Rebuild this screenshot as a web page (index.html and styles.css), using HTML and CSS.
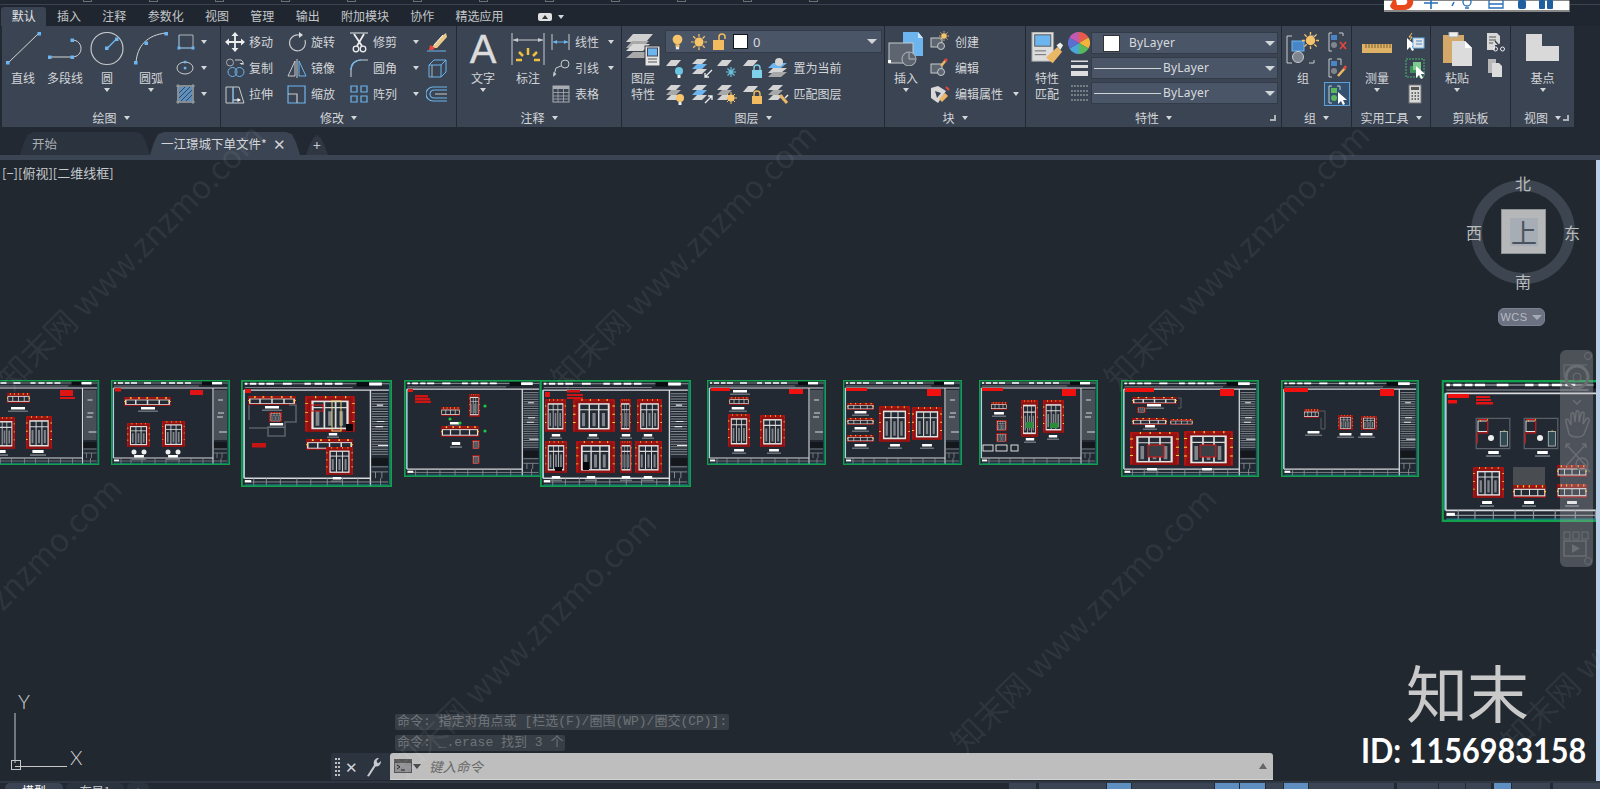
FILE: index.html
```html
<!DOCTYPE html>
<html lang="zh">
<head>
<meta charset="utf-8">
<title>AutoCAD</title>
<link rel="stylesheet" href="styles.css">
</head>
<body>
<svg class="sprite" aria-hidden="true">
  <defs>
    <symbol id="dot" viewBox="0 0 4 4"><rect width="4" height="4" fill="#6db5ee"/></symbol>
    <symbol id="i-line" viewBox="0 0 36 34"><path d="M3 31 34 1" stroke="#d4d6d8" fill="none"/><rect x="1" y="29" width="3.5" height="3.5" fill="#6db5ee"/><rect x="32.5" y="0" width="3.5" height="3.5" fill="#6db5ee"/></symbol>
    <symbol id="i-poly" viewBox="0 0 36 34"><path d="M3 25H25C37 25 37 8 25 8" stroke="#d4d6d8" fill="none"/><rect x="1" y="23.5" width="3.5" height="3.5" fill="#6db5ee"/><rect x="23.5" y="23.5" width="3.5" height="3.5" fill="#6db5ee"/><rect x="23.5" y="6.5" width="3.5" height="3.5" fill="#6db5ee"/></symbol>
    <symbol id="i-circle" viewBox="0 0 36 34"><circle cx="18" cy="16.500" r="16" stroke="#c4c7ca" fill="none" stroke-width="1.200"/><path d="M18 16.500 27 7.500" stroke="#6db5ee" stroke-width="1.500"/><rect x="16" y="14.500" width="3.500" height="3.500" fill="#6db5ee"/><rect x="26" y="5.500" width="3.500" height="3.500" fill="#6db5ee"/></symbol>
    <symbol id="i-arc" viewBox="0 0 36 34"><path d="M3 31C4 14 14 3 33 1" stroke="#d4d6d8" fill="none"/><rect x="1" y="29" width="3.500" height="3.500" fill="#6db5ee"/><rect x="11.500" y="9.500" width="3.500" height="3.500" fill="#6db5ee"/><rect x="31.500" y="0" width="3.500" height="3.500" fill="#6db5ee"/></symbol>
    <symbol id="i-rect" viewBox="0 0 22 22"><path d="M5 4H19V17H5Z" stroke="#aeb3b8" fill="none"/><path d="M5 4V17H19" stroke="#6db5ee" fill="none" opacity=".6"/><rect x="3.500" y="15.500" width="3" height="3" fill="#6db5ee"/><rect x="17.500" y="15.500" width="3" height="3" fill="#6db5ee"/></symbol>
    <symbol id="i-ellipse" viewBox="0 0 22 22"><ellipse cx="11" cy="11" rx="8" ry="6" stroke="#c8cbce" fill="none"/><rect x="9.800" y="9.800" width="2.500" height="2.500" fill="#6db5ee"/><rect x="9.800" y="3.800" width="2.500" height="2.500" fill="#6db5ee"/></symbol>
    <symbol id="i-hatch" viewBox="0 0 22 22"><rect x="5" y="4" width="13" height="14" fill="#5f8fbc"/><path d="M5 10 11 4M5 15 16 4M7 18 18 7M12 18 18 12" stroke="#31465e"/><path d="M4 3H19V19H4ZM4 1V21M19 1V21M2 3H21M2 19H21" stroke="#9ea4aa" fill="none"/></symbol>
    <symbol id="i-move" viewBox="0 0 22 22"><path d="M11 2V20M2 11H20" stroke="#eee" stroke-width="1.800"/><path d="M11 1 14.500 5H7.500ZM11 21 7.500 17H14.500ZM1 11 5 7.500V14.500ZM21 11 17 14.500V7.500Z" fill="#eee"/></symbol>
    <symbol id="i-copy" viewBox="0 0 22 22"><circle cx="6" cy="5.500" r="3.500" stroke="#aaaeb2" fill="none"/><path d="M11 3H17L19 5V8" stroke="#c8cbce" fill="none"/><path d="M17.500 7.800 15.500 6H20Z" fill="#ddd"/><circle cx="8.500" cy="15" r="4.500" stroke="#6db5ee" fill="none"/><circle cx="15.500" cy="15" r="4.500" stroke="#6db5ee" fill="none"/></symbol>
    <symbol id="i-stretch" viewBox="0 0 22 22"><path d="M2 4H9V20H2ZM9 4H15L20 20H9" stroke="#c8cbce" fill="none"/><path d="M9 17H15" stroke="#fff"/><path d="M17 17 13.500 15V19Z" fill="#fff"/><path d="M9 4V20" stroke="#6db5ee"/></symbol>
    <symbol id="i-rotate" viewBox="0 0 22 22"><path d="M13 4A8 8 0 1 0 19 9" stroke="#c4c7ca" fill="none" stroke-width="1.200"/><path d="M13 1V7L17 4Z" fill="#ddd"/></symbol>
    <symbol id="i-mirror" viewBox="0 0 22 22"><path d="M9 4 2 19H9Z" stroke="#c8cbce" fill="none"/><path d="M13 4 20 19H13Z" stroke="#6db5ee" fill="none"/><path d="M11 2V21" stroke="#c8cbce"/></symbol>
    <symbol id="i-scale" viewBox="0 0 22 22"><path d="M2 3H19V20H2Z" stroke="#6db5ee" fill="none" stroke-width="1.200"/><path d="M2 11H11V20" stroke="#c8cbce" fill="none" stroke-width="1.200"/></symbol>
    <symbol id="i-trim" viewBox="0 0 22 22"><path d="M2 2H20" stroke="#aeb3b8" stroke-width="1.500"/><path d="M6 3 14 15M16 3 9 15" stroke="#eee" stroke-width="1.800"/><circle cx="8" cy="18" r="2.800" stroke="#eee" fill="none" stroke-width="1.300"/><circle cx="15" cy="18" r="2.800" stroke="#eee" fill="none" stroke-width="1.300"/></symbol>
    <symbol id="i-fillet" viewBox="0 0 22 22"><path d="M3 20V13C3 7 7 3 13 3H20" stroke="#c8cbce" fill="none" stroke-width="1.100"/><path d="M3 13C3 7 7 3 13 3" stroke="#6db5ee" fill="none" stroke-width="1.100"/></symbol>
    <symbol id="i-array" viewBox="0 0 22 22"><path d="M3 3H9V9H3ZM13 3H19V9H13ZM3 13H9V19H3ZM13 13H19V19H13Z" stroke="#6db5ee" fill="none" stroke-width="1.200"/></symbol>
    <symbol id="i-erase" viewBox="0 0 22 22"><path d="M6 16 16 5 20 2 21 6 11 17H7Z" fill="#e9c98a"/><path d="M4 14 9 17 7 19H3Z" fill="#e9453c"/><path d="M1 20H20" stroke="#6db5ee"/><path d="M8 14 17 4" stroke="#fff"/></symbol>
    <symbol id="i-box" viewBox="0 0 22 22"><path d="M3 8H15V20H3ZM3 8 8 3H20V15L15 20M15 8 20 3" stroke="#6db5ee" fill="none"/><path d="M6 8V20" stroke="#aeb3b8"/></symbol>
    <symbol id="i-offset" viewBox="0 0 22 22"><path d="M21 7H8A4 4 0 0 0 8 15H21" stroke="#6db5ee" fill="none" stroke-width="1.200"/><path d="M21 4H7A7 7 0 0 0 7 18H21" stroke="#6db5ee" fill="none" stroke-width="1.200"/><path d="M21 11H9" stroke="#c8cbce"/></symbol>
    <symbol id="i-dim" viewBox="0 0 36 34"><path d="M2 1V33M34 1V33" stroke="#c8cbce"/><path d="M3 8H33" stroke="#c8cbce"/><path d="M3 8 8 6V10ZM33 8 28 6V10Z" fill="#c8cbce"/><path d="M18 16V23M9 20 13 24M27 20 23 24M6 28H12M24 28H30" stroke="#f0c040" stroke-width="2.500"/></symbol>
    <symbol id="i-dimlin" viewBox="0 0 22 22"><path d="M2 3V19M19 3V19" stroke="#c8cbce"/><path d="M3 11H18" stroke="#6db5ee"/><path d="M3 11 7 9V13ZM18 11 14 9V13Z" fill="#6db5ee"/></symbol>
    <symbol id="i-lead" viewBox="0 0 22 22"><circle cx="15" cy="7" r="4" stroke="#c8cbce" fill="none"/><path d="M11 9 6 11 4 18" stroke="#c8cbce" fill="none"/><path d="M3 20 3.500 15 6.500 17Z" fill="#c8cbce"/></symbol>
    <symbol id="i-table" viewBox="0 0 22 22"><rect x="3" y="3" width="16" height="16" fill="none" stroke="#a9adb2"/><rect x="3" y="3" width="16" height="3" fill="#a9adb2"/><path d="M3 9.500H19M3 13H19M3 16H19M8 6V19M13.500 6V19" stroke="#a9adb2" stroke-width=".8"/></symbol>
    <symbol id="i-layers" viewBox="0 0 36 34"><path d="M8 2H28L21 10H1Z" fill="#d0d0d0"/><path d="M7 9H24L17 16H1Z" fill="#a9a9a9"/><path d="M8 12H25L18 19H1Z" fill="#d8d8d8"/><path d="M8 20H24V26H1Z" fill="#a9a9a9"/><rect x="20" y="14" width="15" height="20" fill="#e5e5e5" stroke="#333a45"/><rect x="22.500" y="16" width="10" height="8" fill="#6db5ee" stroke="#445"/><path d="M23 27H32M23 30H32" stroke="#555"/></symbol>
    <symbol id="i-bulb" viewBox="0 0 16 22"><circle cx="8" cy="8" r="6" fill="#f6c56b"/><rect x="5.500" y="14" width="5" height="3" fill="#f6c56b"/><rect x="6" y="17" width="4" height="3" fill="#eee"/></symbol>
    <symbol id="i-sun" viewBox="0 0 18 18"><circle cx="9" cy="9" r="5" fill="#f6c56b"/><path d="M9 0V3M9 15V18M0 9H3M15 9H18M2.500 2.500 5 5M13 13 15.500 15.500M2.500 15.500 5 13M13 5 15.500 2.500" stroke="#f6c56b" stroke-width="1.400"/></symbol>
    <symbol id="i-lock" viewBox="0 0 16 18"><rect x="1" y="7" width="11" height="10" fill="#f3bb5f"/><path d="M7 7V4A3 3 0 0 1 13 4V6" stroke="#f3bb5f" fill="none" stroke-width="1.500"/></symbol>
    <symbol id="i-sheet" viewBox="0 0 22 22"><path d="M6 3H16L11 9H1Z" fill="#d4d4d4"/></symbol>
    <symbol id="i-stack" viewBox="0 0 22 22"><path d="M6 2H16L11 7H1Z" fill="#d4d4d4"/><path d="M6 7H16L11 12H1Z" fill="#a8a8a8"/><path d="M6 12H16L11 17H1Z" fill="#d4d4d4"/></symbol>
    <symbol id="i-stackb" viewBox="0 0 22 22"><path d="M6 2H16L11 7H1Z" fill="#d4d4d4"/><path d="M6 7H16L11 12H1Z" fill="#6db5ee"/><path d="M6 12H16L11 17H1Z" fill="#d4d4d4"/></symbol>
    <symbol id="l1" viewBox="0 0 22 22"><use href="#i-sheet"/><circle cx="14" cy="14" r="4" fill="#6cc4e0"/><rect x="12.500" y="18" width="3" height="3" fill="#eee"/></symbol>
    <symbol id="l2" viewBox="0 0 22 22"><use href="#i-stackb"/><path d="M21 13 14 20M14 16V20H18" stroke="#eee" fill="none" stroke-width="1.300"/></symbol>
    <symbol id="l3" viewBox="0 0 22 22"><use href="#i-sheet"/><path d="M15 10V20M10 15H20M11.500 11.500 18.500 18.500M18.500 11.500 11.500 18.500" stroke="#6cc4e0" stroke-width="1.200"/></symbol>
    <symbol id="l4" viewBox="0 0 22 22"><use href="#i-sheet"/><rect x="10" y="13" width="10" height="8" fill="#7ed1e8"/><path d="M12 13V11A3 3 0 0 1 18 11V13" stroke="#7ed1e8" fill="none" stroke-width="1.400"/></symbol>
    <symbol id="l5" viewBox="0 0 22 22"><path d="M6 6H20L14 11H1Z" fill="#6db5ee"/><path d="M6 11H20L14 16H1Z" fill="#d4d4d4"/><path d="M6 15H20L14 20H1Z" fill="#a8a8a8"/><circle cx="12" cy="5" r="4" fill="#d4d4d4"/></symbol>
    <symbol id="l6" viewBox="0 0 22 22"><use href="#i-stack"/><circle cx="15" cy="15" r="4" fill="#f6c56b"/><rect x="13.500" y="19" width="3" height="3" fill="#eee"/></symbol>
    <symbol id="l7" viewBox="0 0 22 22"><use href="#i-stackb"/><path d="M14 20 21 13M17 13H21V17" stroke="#eee" fill="none" stroke-width="1.300"/></symbol>
    <symbol id="l8" viewBox="0 0 22 22"><use href="#i-stack"/><circle cx="15" cy="15" r="3.500" fill="#f6c56b"/><path d="M15 9V21M9 15H21M11 11 19 19M19 11 11 19" stroke="#f6c56b"/></symbol>
    <symbol id="l9" viewBox="0 0 22 22"><use href="#i-sheet"/><rect x="10" y="13" width="10" height="8" fill="#f3bb5f"/><path d="M12 13V11A3 3 0 0 1 18 11V13" stroke="#f3bb5f" fill="none" stroke-width="1.400"/></symbol>
    <symbol id="l10" viewBox="0 0 22 22"><use href="#i-stack"/><path d="M13 12 20 20" stroke="#eab765" stroke-width="3"/><path d="M18 15 21 12" stroke="#eee" stroke-width="1.500"/></symbol>
    <symbol id="i-insert" viewBox="0 0 36 34"><path d="M15 0H30L35 6V24H15Z" fill="#6db5ee"/><path d="M30 0 35 6H30Z" fill="#cfe6fa"/><rect x="1" y="11" width="24" height="20" fill="#5d6570" stroke="#c8cbce"/><circle cx="21" cy="27" r="7" fill="#5d6570" stroke="#b8bbbe"/><path d="M21 21V27H27" stroke="#b8bbbe" fill="none"/><rect x="0" y="28" width="3" height="3" fill="#fff"/></symbol>
    <symbol id="b1" viewBox="0 0 22 22"><rect x="3" y="7" width="11" height="9" fill="#5d6570" stroke="#c8cbce"/><circle cx="13" cy="15" r="3.500" fill="#5d6570" stroke="#c8cbce"/><use href="#i-sun" x="11" y="0" width="10" height="10"/></symbol>
    <symbol id="b2" viewBox="0 0 22 22"><rect x="3" y="7" width="11" height="9" fill="#5d6570" stroke="#c8cbce"/><circle cx="13" cy="15" r="3.500" fill="#5d6570" stroke="#c8cbce"/><path d="M13 9 18 3" stroke="#eab765" stroke-width="2.500"/><path d="M17 4 19 2" stroke="#e9453c" stroke-width="2.500"/></symbol>
    <symbol id="b3" viewBox="0 0 22 22"><path d="M3 5 10 3 18 8 10 20 3 15Z" fill="#d8d8d8"/><path d="M7 8 13 10 9 15Z" fill="#3b4453"/><path d="M11 16 17 10 20 13 14 19Z" fill="#eab765"/><path d="M18 4 21 7" stroke="#e9453c" stroke-width="2"/></symbol>
    <symbol id="i-match" viewBox="0 0 34 36"><rect x="1" y="0" width="23" height="31" fill="#ddd" stroke="#8b8f94"/><rect x="4" y="3" width="17" height="12" fill="#6db5ee" stroke="#555"/><path d="M4 20H16M4 24H16" stroke="#666"/><path d="M16 27 28 16 33 21 23 33Z" fill="#eab765"/><path d="M27 14 31 11 34 14 31 19Z" fill="#eee"/></symbol>
    <symbol id="i-wheel" viewBox="0 0 22 22"><path d="M11 11 11 0A11 11 0 0 1 20.500 5.500Z" fill="#e75a4c"/><path d="M11 11 20.500 5.500A11 11 0 0 1 20.500 16.500Z" fill="#f2b33d"/><path d="M11 11 20.500 16.500A11 11 0 0 1 11 22Z" fill="#57b95c"/><path d="M11 11 11 22A11 11 0 0 1 1.500 16.500Z" fill="#4aa7d8"/><path d="M11 11 1.500 16.500A11 11 0 0 1 1.500 5.500Z" fill="#5b6fd0"/><path d="M11 11 1.500 5.500A11 11 0 0 1 11 0Z" fill="#c45ab0"/></symbol>
    <symbol id="i-lw" viewBox="0 0 22 22"><path d="M3 4H20M3 4.500H20" stroke="#ddd"/><rect x="3" y="8" width="17" height="3" fill="#ddd"/><rect x="3" y="14" width="17" height="5" fill="#ddd"/></symbol>
    <symbol id="i-lt" viewBox="0 0 22 22"><path d="M3 4H20M3 9H20M3 13H20M3 18H20" stroke="#aeb3b8" stroke-dasharray="2 1" stroke-width="1.200"/></symbol>
    <symbol id="i-group" viewBox="0 0 36 34"><path d="M7 4H2V31H7M24 4 29 4M24 31H29V28" stroke="#c8cbce" fill="none"/><rect x="7" y="9" width="12" height="10" fill="#4a86c5" stroke="#6db5ee"/><circle cx="13" cy="25" r="5.500" fill="#7e858e" stroke="#c8cbce"/><use href="#i-sun" x="17" y="0" width="17" height="17"/></symbol>
    <symbol id="g1" viewBox="0 0 22 22"><path d="M6 2H3V20H6M13 2H17V5" stroke="#c8cbce" fill="none"/><rect x="5" y="4" width="6" height="5" fill="#4a86c5"/><circle cx="8" cy="14" r="3" fill="#7e858e"/><path d="M14 11 20 18M20 11 14 18" stroke="#e9453c" stroke-width="1.600"/></symbol>
    <symbol id="g2" viewBox="0 0 22 22"><path d="M6 2H3V20H6M11 2H15V8" stroke="#c8cbce" fill="none"/><rect x="5" y="4" width="6" height="5" fill="#4a86c5"/><circle cx="8" cy="14" r="3" fill="#7e858e"/><path d="M12 19 19 11" stroke="#eab765" stroke-width="2.500"/><path d="M18 12 20 9" stroke="#e9453c" stroke-width="2.500"/></symbol>
    <symbol id="g3" viewBox="0 0 22 22"><path d="M6 3H3V20H6M11 3H14V7" stroke="#c8cbce" fill="none"/><rect x="5" y="5" width="6" height="5" fill="#5db55e"/><circle cx="8" cy="15" r="3" fill="#5db55e"/><path d="M12 9V21L15 18 17 22 19 21 17 17H21Z" fill="#fff"/></symbol>
    <symbol id="i-ruler" viewBox="0 0 36 34"><rect x="3" y="12" width="30" height="9" fill="#deb368"/><path d="M7 12V16M10 12V16M13 12V16M16 12V16M19 12V16M22 12V16M25 12V16M28 12V16M31 12V16" stroke="#7b5f2a"/></symbol>
    <symbol id="u1" viewBox="0 0 22 22"><path d="M3 7V19L6 16 8 20 10 19 8 15H12Z" fill="#fff"/><rect x="9" y="7" width="11" height="10" fill="#e5e5e5" stroke="#6db5ee"/><path d="M12 10H18M12 13H18" stroke="#4a86c5"/><path d="M8 2 5 6H8L6 9" stroke="#f6c56b" fill="none"/></symbol>
    <symbol id="u2" viewBox="0 0 22 22"><path d="M2 2H20V20H2Z" stroke="#4db36b" stroke-dasharray="2 1" fill="none"/><path d="M6 9H14V16H6Z" fill="#3f8f5a"/><path d="M9 5H17V13H9Z" fill="#7ecb8f"/><path d="M12 9V21L15 18 17 22 19 21 17 17H21Z" fill="#fff"/></symbol>
    <symbol id="u3" viewBox="0 0 22 22"><rect x="5" y="2" width="12" height="18" fill="#d8d8d8" stroke="#777"/><rect x="7" y="4" width="8" height="3" fill="#555"/><path d="M7.500 10H9M10.500 10H12M13.500 10H15M7.500 13H9M10.500 13H12M13.500 13H15M7.500 16H9M10.500 16H12M13.500 16H15" stroke="#444" stroke-width="1.500"/></symbol>
    <symbol id="i-paste" viewBox="0 0 36 34"><rect x="4" y="3" width="21" height="28" fill="#d3a868"/><rect x="10" y="0" width="9" height="5" fill="#eee" stroke="#aaa"/><path d="M13 9H26L33 16V34H13Z" fill="#dcdcdc"/><path d="M26 9 33 16H26Z" fill="#fff"/></symbol>
    <symbol id="p1" viewBox="0 0 22 22"><path d="M3 2H13L16 5V14H11V19H3Z" fill="#d8d8d8"/><path d="M5 6H12M5 9H12M5 12H9" stroke="#555"/><path d="M11 10 19 19M19 10 11 19" stroke="#3d4450" stroke-width="1.500"/><circle cx="11.500" cy="18" r="2" stroke="#eee" fill="none"/><circle cx="18.500" cy="18" r="2" stroke="#eee" fill="none"/></symbol>
    <symbol id="p2" viewBox="0 0 22 22"><path d="M4 2H12V16H4Z" fill="#b8b8b8"/><path d="M8 6H15L18 9V20H8Z" fill="#dcdcdc"/></symbol>
    <symbol id="i-base" viewBox="0 0 36 34"><path d="M1 2H17V14H34V29H1Z" fill="#d9d9d9"/></symbol>

    <symbol id="frame" viewBox="0 0 119 85" preserveAspectRatio="none">
      <rect x=".7" y=".7" width="117.600" height="83.600" fill="#222933" stroke="#11a04b" stroke-width="1.400"/>
      <path d="M2.500 3H117" stroke="#8f959a" stroke-width=".8"/>
      <path d="M3 3H5M7 3H12M14 3H18.500M20 3H26M33 3H40M50 3H55M58 3H64M66 3H72M74 3H80" stroke="#fff" stroke-width="1.600"/>
      <rect x="91" y="1.700" width="10" height="3.500" fill="#0a0d12"/><rect x="101" y="2" width="10" height="2.400" fill="#fff"/>
      <path d="M3 6H88" stroke="#8f959a" stroke-width=".7"/>
      <path d="M2.500 8V78M2.500 78H102M2.500 8H102V84M102 8H116.500" stroke="#d8dadc" stroke-width="1.100" fill="none"/>
      <path d="M2.200 8V78" stroke="#7fd6e0" stroke-width=".8"/>
      <path d="M103 11H116M103 13H116M103 15H116M103 17H116M103 19H116M103 21H116M103 23H116M103 25H116M103 27H116M103 29H116M103 31H116M103 33H116M103 35H116M103 37H116M103 39H116M103 41H116M103 43H116M103 45H116M103 47H116M103 49H116M103 51H116M103 53H116M103 55H116M103 57H116M103 59H116" stroke="#858b90" stroke-width=".8"/>
      <path d="M107 20H112M107 33H113M106 37H112M108 52H116" stroke="#e8e8e8" stroke-width=".9"/>
      <rect x="103" y="62" width="13" height="6" fill="#14181d"/>
      <path d="M103 69H116M103 73H116M106 73V78M111 73V78" stroke="#8f959a" stroke-width=".7"/>
      <path d="M3 81H116M10 78V84M20 78V84M31 78V84M44 78V84M55 78V84M68 78V84M80 78V84M92 78V84M110 78V84" stroke="#8f959a" stroke-width=".7"/>
      <rect x="3" y="79.500" width="5" height="1.800" fill="#fff"/>
      <path d="M3 83.300H116.500M117.200 2V83" stroke="#1b8b8b" stroke-width=".7"/>
    </symbol>
    <symbol id="cab" viewBox="0 0 40 40" preserveAspectRatio="none">
      <rect x="0" y="0" width="40" height="40" fill="#8e1212"/>
      <rect x="6" y="6" width="28" height="30" fill="#232a33" stroke="#e4e4e4" stroke-width="1.800"/>
      <path d="M15.500 6V36M24.500 6V36M6 13H34" stroke="#d8d8d8" stroke-width="1.400"/>
      <path d="M10 17V33M20 17V33M29 17V33" stroke="#80858b" stroke-width="3"/>
      <path d="M1 1H39M1 1V39M39 1V39" stroke="#b81414" stroke-width="1.600" fill="none"/>
      <path d="M1 8V9M1 18V19M1 28V29M39 8V9M39 18V19M39 28V29M8 1H9M16 1H17M24 1H25M32 1H33" stroke="#f5d633" stroke-width="3"/>
    </symbol>
    <symbol id="cabw" viewBox="0 0 80 30" preserveAspectRatio="none">
      <rect width="80" height="30" fill="#8e1212"/>
      <rect x="3" y="10" width="74" height="15" fill="#232a33" stroke="#e8e8e8" stroke-width="2.500"/>
      <path d="M20 10V25M40 10V25M60 10V25" stroke="#dedede" stroke-width="2.500"/>
      <path d="M2 2H78" stroke="#b81414" stroke-width="2.500"/>
      <path d="M10 3H13M24 3H27M38 3H41M55 3H58M70 3H73M1 14V17M78 14V17" stroke="#f5d633" stroke-width="5"/>
    </symbol>
    <symbol id="room" viewBox="0 0 60 50" preserveAspectRatio="none">
      <path d="M2 2H58V48H2Z" stroke="#5c6167" fill="none" stroke-width="2"/>
      <rect x="5" y="6" width="16" height="16" fill="none" stroke="#e8e8e8" stroke-width="1.500"/>
      <path d="M5 4H21V24H5" stroke="#c81414" fill="none" stroke-width="2"/>
      <rect x="42" y="22" width="12" height="22" fill="#2f4851" stroke="#e8e8e8"/>
      <path d="M4 24V40" stroke="#c81414" stroke-width="2"/>
      <path d="M9 6H10M20 4H21M48 21H49" stroke="#f5d633" stroke-width="3"/>
    </symbol>
    <symbol id="bar" viewBox="0 0 20 6" preserveAspectRatio="none"><rect x="3" y="0" width="14" height="3" fill="#fff"/><rect x="0" y="4.300" width="20" height="1.500" fill="#7a7f85"/></symbol>
  </defs>
</svg>

<header class="topbar">
  <span class="mark"></span><span class="mark"></span><span class="mark"></span><span class="mark"></span><span class="mark"></span><span class="mark"></span><span class="mark"></span><span class="mark"></span><span class="mark"></span><span class="mark"></span><span class="mark"></span><span class="mark"></span>
</header>

<div class="imebar">
  <svg viewBox="0 0 186 12" width="186" height="12">
    <rect width="186" height="12" fill="#fff"/><path d="M0 0H186V11H0" fill="none" stroke="#111" stroke-width="1"/>
    <path d="M9 0H29C30 5 27 9 21 10 H12C8 10 7 8 6 6" fill="#e8481c"/><path d="M12 0H23C24 3 22 5 19 5 H13" fill="#fff"/>
    <path d="M47 0V9M40 3H54" stroke="#276fb5" stroke-width="1.600"/><path d="M70 2 68 6" stroke="#276fb5" stroke-width="1.600"/>
    <circle cx="83" cy="2" r="4" fill="none" stroke="#276fb5" stroke-width="1.300"/><path d="M81 8H85" stroke="#276fb5" stroke-width="1.500"/>
    <path d="M105 0V8H119V0M105 4H119" fill="none" stroke="#276fb5" stroke-width="1.300"/>
    <rect x="134" y="0" width="8" height="9" rx="2" fill="#1f5f9f"/><rect x="155" y="0" width="6" height="9" rx="1" fill="#1f5f9f"/><rect x="163" y="0" width="6" height="9" rx="1" fill="#1f5f9f"/>
  </svg>
</div>

<nav class="tabs">
  <span class="tab active">默认</span><span class="tab">插入</span><span class="tab">注释</span><span class="tab">参数化</span><span class="tab">视图</span><span class="tab">管理</span><span class="tab">输出</span><span class="tab">附加模块</span><span class="tab">协作</span><span class="tab">精选应用</span>
  <span class="toggle"><span class="toggle-pill"><i class="up"></i></span><i class="caret"></i></span>
</nav>

<section class="ribbon">
  <div class="panel p-draw">
    <div class="body">
      <div class="big w42"><svg class="bigic"><use href="#i-line"/></svg><span>直线</span></div>
      <div class="big w42"><svg class="bigic"><use href="#i-poly"/></svg><span>多段线</span></div>
      <div class="big w42"><svg class="bigic"><use href="#i-circle"/></svg><span>圆</span><i class="caret"></i></div>
      <div class="big w46"><svg class="bigic"><use href="#i-arc"/></svg><span>圆弧</span><i class="caret"></i></div>
      <div class="rows w-draw">
        <div class="row"><svg class="ic"><use href="#i-rect"/></svg><i class="caret push"></i></div>
        <div class="row"><svg class="ic"><use href="#i-ellipse"/></svg><i class="caret push"></i></div>
        <div class="row"><svg class="ic"><use href="#i-hatch"/></svg><i class="caret push"></i></div>
      </div>
    </div>
    <div class="title">绘图<i class="caret"></i></div>
  </div>

  <div class="panel p-modify">
    <div class="body modify-grid">
      <div class="row"><svg class="ic"><use href="#i-move"/></svg><span>移动</span></div>
      <div class="row"><svg class="ic"><use href="#i-rotate"/></svg><span>旋转</span></div>
      <div class="row"><svg class="ic"><use href="#i-trim"/></svg><span>修剪</span><i class="caret push"></i></div>
      <div class="row"><svg class="ic"><use href="#i-erase"/></svg></div>
      <div class="row"><svg class="ic"><use href="#i-copy"/></svg><span>复制</span></div>
      <div class="row"><svg class="ic"><use href="#i-mirror"/></svg><span>镜像</span></div>
      <div class="row"><svg class="ic"><use href="#i-fillet"/></svg><span>圆角</span><i class="caret push"></i></div>
      <div class="row"><svg class="ic"><use href="#i-box"/></svg></div>
      <div class="row"><svg class="ic"><use href="#i-stretch"/></svg><span>拉伸</span></div>
      <div class="row"><svg class="ic"><use href="#i-scale"/></svg><span>缩放</span></div>
      <div class="row"><svg class="ic"><use href="#i-array"/></svg><span>阵列</span><i class="caret push"></i></div>
      <div class="row"><svg class="ic"><use href="#i-offset"/></svg></div>
    </div>
    <div class="title">修改<i class="caret"></i></div>
  </div>

  <div class="panel p-note">
    <div class="body">
      <div class="big w52"><span class="biga">A</span><span>文字</span><i class="caret"></i></div>
      <div class="big w38"><svg class="bigic"><use href="#i-dim"/></svg><span>标注</span></div>
      <div class="rows w-note">
        <div class="row"><svg class="ic"><use href="#i-dimlin"/></svg><span>线性</span><i class="caret push"></i></div>
        <div class="row"><svg class="ic"><use href="#i-lead"/></svg><span>引线</span><i class="caret push"></i></div>
        <div class="row"><svg class="ic"><use href="#i-table"/></svg><span>表格</span></div>
      </div>
    </div>
    <div class="title">注释<i class="caret"></i></div>
  </div>

  <div class="panel p-layer">
    <div class="body">
      <div class="big w42"><svg class="bigic"><use href="#i-layers"/></svg><span>图层</span><span>特性</span></div>
      <div class="layer-col">
        <div class="combo layer-combo">
          <svg class="lc1"><use href="#i-bulb"/></svg><svg class="lc2"><use href="#i-sun"/></svg><svg class="lc3"><use href="#i-lock"/></svg>
          <span class="swatch"></span><span class="combo-text">0</span><i class="caret push big-caret"></i>
        </div>
        <div class="layer-row"><svg class="ic"><use href="#l1"/></svg><svg class="ic"><use href="#l2"/></svg><svg class="ic"><use href="#l3"/></svg><svg class="ic"><use href="#l4"/></svg><svg class="ic"><use href="#l5"/></svg><span>置为当前</span></div>
        <div class="layer-row"><svg class="ic"><use href="#l6"/></svg><svg class="ic"><use href="#l7"/></svg><svg class="ic"><use href="#l8"/></svg><svg class="ic"><use href="#l9"/></svg><svg class="ic"><use href="#l10"/></svg><span>匹配图层</span></div>
      </div>
    </div>
    <div class="title">图层<i class="caret"></i></div>
  </div>

  <div class="panel p-block">
    <div class="body">
      <div class="big w42"><svg class="bigic"><use href="#i-insert"/></svg><span>插入</span><i class="caret"></i></div>
      <div class="rows w-block">
        <div class="row"><svg class="ic"><use href="#b1"/></svg><span>创建</span></div>
        <div class="row"><svg class="ic"><use href="#b2"/></svg><span>编辑</span></div>
        <div class="row"><svg class="ic"><use href="#b3"/></svg><span>编辑属性</span><i class="caret push"></i></div>
      </div>
    </div>
    <div class="title">块<i class="caret"></i></div>
  </div>

  <div class="panel p-prop">
    <div class="body">
      <div class="big w42"><svg class="bigic"><use href="#i-match"/></svg><span>特性</span><span>匹配</span></div>
      <div class="prop-col">
        <div class="prop-row"><svg class="ic"><use href="#i-wheel"/></svg><div class="combo prop-combo"><span class="swatch prop-swatch"></span><span class="combo-text">ByLayer</span><i class="caret push big-caret"></i></div></div>
        <div class="prop-row"><svg class="ic"><use href="#i-lw"/></svg><div class="combo prop-combo"><span class="combo-line"></span><span class="combo-text tight">ByLayer</span><i class="caret push big-caret"></i></div></div>
        <div class="prop-row"><svg class="ic"><use href="#i-lt"/></svg><div class="combo prop-combo"><span class="combo-line"></span><span class="combo-text tight">ByLayer</span><i class="caret push big-caret"></i></div></div>
      </div>
    </div>
    <div class="title">特性<i class="caret"></i><span class="launch"></span></div>
  </div>

  <div class="panel p-group">
    <div class="body">
      <div class="big w42"><svg class="bigic"><use href="#i-group"/></svg><span>组</span></div>
      <div class="rows w-narrow">
        <div class="row"><svg class="ic"><use href="#g1"/></svg></div>
        <div class="row"><svg class="ic"><use href="#g2"/></svg></div>
        <div class="row"><span class="hot"><svg class="ic"><use href="#g3"/></svg></span></div>
      </div>
    </div>
    <div class="title">组<i class="caret"></i></div>
  </div>

  <div class="panel p-util">
    <div class="body">
      <div class="big w50"><svg class="bigic"><use href="#i-ruler"/></svg><span>测量</span><i class="caret"></i></div>
      <div class="rows w-narrow">
        <div class="row"><svg class="ic"><use href="#u1"/></svg></div>
        <div class="row"><svg class="ic"><use href="#u2"/></svg></div>
        <div class="row"><svg class="ic"><use href="#u3"/></svg></div>
      </div>
    </div>
    <div class="title">实用工具<i class="caret"></i></div>
  </div>

  <div class="panel p-clip">
    <div class="body">
      <div class="big w50"><svg class="bigic"><use href="#i-paste"/></svg><span>粘贴</span><i class="caret"></i></div>
      <div class="rows w-narrow">
        <div class="row"><svg class="ic"><use href="#p1"/></svg></div>
        <div class="row"><svg class="ic"><use href="#p2"/></svg></div>
      </div>
    </div>
    <div class="title">剪贴板</div>
  </div>

  <div class="panel p-view">
    <div class="body">
      <div class="big w62"><svg class="bigic"><use href="#i-base"/></svg><span>基点</span><i class="caret"></i></div>
    </div>
    <div class="title">视图<i class="caret"></i><span class="launch"></span></div>
  </div>
</section>

<nav class="doctabs">
  <span class="doctab">开始</span>
  <span class="doctab current">一江璟城下单文件*<b class="close">✕</b></span>
  <span class="doctab plus">+</span>
</nav>
<div class="band"></div>

<main class="viewport">
  <div class="viewlabel">[−][俯视][二维线框]</div>

  <svg class="drawing" viewBox="0 160 1600 621" width="1600" height="621">
    <!-- sheet 1 -->
    <use href="#frame" x="-19.500" y="380" width="119" height="85"/>
    <use href="#cabw" x="7" y="393" width="23" height="10"/><use href="#bar" x="8" y="407" width="20" height="5"/>
    <use href="#cab" x="-6" y="417" width="21" height="32"/><use href="#cab" x="26" y="416" width="26" height="33"/>
    <use href="#bar" x="-8" y="450" width="16" height="6"/><use href="#bar" x="30" y="450" width="16" height="6"/>
    <rect x="60" y="390" width="13" height="6" fill="#e01414"/><rect x="60" y="397" width="15" height="2" fill="#e01414"/>
    <!-- sheet 2 -->
    <use href="#frame" x="111" y="380" width="119" height="85"/>
    <rect x="115" y="388" width="6" height="3.500" fill="#e01414"/><rect x="190" y="390" width="13" height="5" fill="#e01414"/>
    <use href="#cabw" x="124" y="397" width="47" height="9"/><use href="#bar" x="138" y="407" width="20" height="5"/>
    <use href="#cab" x="127" y="423" width="23" height="24"/><use href="#cab" x="162" y="421" width="23" height="26"/>
    <circle cx="134" cy="452" r="2.500" fill="#eee"/><circle cx="144" cy="452" r="2.500" fill="#eee"/><circle cx="168" cy="452" r="2.500" fill="#eee"/><circle cx="178" cy="452" r="2.500" fill="#eee"/>
    <use href="#bar" x="132" y="455" width="14" height="5"/><use href="#bar" x="166" y="455" width="14" height="5"/>
    <!-- sheet 3 -->
    <use href="#frame" x="241" y="380" width="151" height="107"/>
    <rect x="245" y="389" width="6" height="4" fill="#e01414"/><rect x="252" y="443" width="14" height="4.500" fill="#c61414"/>
    <use href="#cabw" x="248" y="396" width="48" height="9"/><use href="#bar" x="262" y="406" width="20" height="5"/>
    <use href="#cab" x="269" y="412" width="13" height="10"/><use href="#bar" x="267" y="423" width="19" height="5"/>
    <path d="M289 405H296V422H285V436H268V428H249M249 405V420" stroke="#5a5f65" stroke-width="1.600" fill="none"/>
    <use href="#cab" x="305" y="396" width="50" height="36"/><use href="#bar" x="327" y="433" width="12" height="5"/>
    <rect x="311" y="405" width="12" height="6" fill="none" stroke="#e01414"/><rect x="332" y="401" width="9" height="30" fill="none" stroke="#e7d676"/>
    <rect x="346" y="424" width="7" height="7" fill="#05070a"/>
    <use href="#cabw" x="306" y="439" width="47" height="11"/><use href="#cab" x="326" y="447" width="27" height="28"/><use href="#bar" x="331" y="477" width="12" height="5"/>
    <!-- sheet 4 -->
    <use href="#frame" x="404" y="380" width="138" height="97"/>
    <rect x="408" y="389" width="5" height="3" fill="#e01414"/><rect x="415" y="395" width="13" height="2.500" fill="#d01414"/><rect x="415" y="398" width="15" height="2.500" fill="#d01414"/><rect x="415" y="401" width="16" height="2" fill="#d01414"/>
    <use href="#cabw" x="441" y="407" width="19" height="9"/><use href="#bar" x="448" y="422" width="13" height="5"/>
    <use href="#cab" x="469" y="394" width="11" height="23"/><use href="#cabw" x="441" y="426" width="38" height="11"/><use href="#bar" x="450" y="442" width="12" height="6"/>
    <use href="#cab" x="472" y="440" width="8" height="9"/><use href="#cab" x="472" y="455" width="8" height="9"/>
    <circle cx="485" cy="406" r="1.600" fill="#1fc83c"/><circle cx="450" cy="419" r="1.600" fill="#1fc83c"/><circle cx="460" cy="423" r="1.600" fill="#1fc83c"/><circle cx="485" cy="431" r="1.600" fill="#1fc83c"/>
    <!-- sheet 5 -->
    <use href="#frame" x="540" y="380" width="151" height="107"/>
    <rect x="545" y="392" width="5" height="5" fill="#e01414"/><rect x="567" y="390" width="13" height="2.500" fill="#d01414"/><rect x="567" y="394" width="16" height="2" fill="#d01414"/><rect x="567" y="397" width="16" height="2" fill="#d01414"/>
    <use href="#cab" x="545" y="399" width="21" height="33"/><use href="#cab" x="573" y="399" width="42" height="33"/><use href="#cab" x="620" y="399" width="11" height="33"/><use href="#cab" x="637" y="399" width="25" height="33"/>
    <use href="#bar" x="550" y="434" width="12" height="5"/><use href="#bar" x="587" y="434" width="12" height="5"/><use href="#bar" x="620" y="434" width="12" height="5"/><use href="#bar" x="642" y="434" width="12" height="5"/>
    <use href="#cab" x="545" y="441" width="22" height="32"/><use href="#cab" x="576" y="441" width="39" height="32"/><use href="#cab" x="620" y="441" width="12" height="32"/><use href="#cab" x="635" y="441" width="27" height="32"/>
    <use href="#bar" x="550" y="476" width="12" height="5"/><use href="#bar" x="585" y="476" width="12" height="5"/><use href="#bar" x="620" y="476" width="12" height="5"/><use href="#bar" x="642" y="476" width="12" height="5"/>
    <rect x="583" y="462" width="6" height="8" fill="#05070a"/><rect x="555" y="467" width="7" height="4" fill="#05070a"/>
    <!-- sheet 6 -->
    <use href="#frame" x="707" y="380" width="119" height="85"/>
    <rect x="711" y="388" width="19" height="3" fill="#f01010"/><rect x="789" y="389" width="14" height="5" fill="#f01010"/>
    <use href="#bar" x="730" y="390" width="20" height="5"/>
    <use href="#cabw" x="729" y="397" width="20" height="8"/><use href="#bar" x="729" y="407" width="18" height="5"/>
    <use href="#cab" x="728" y="414" width="22" height="33"/><use href="#cab" x="760" y="415" width="25" height="32"/>
    <use href="#bar" x="732" y="449" width="14" height="5"/><use href="#bar" x="767" y="449" width="14" height="5"/>
    <!-- sheet 7 -->
    <use href="#frame" x="843" y="380" width="119" height="85"/>
    <rect x="846" y="388" width="21" height="3" fill="#f01010"/><rect x="927" y="389" width="14" height="7" fill="#f01010"/>
    <use href="#cabw" x="847" y="403" width="27" height="7"/><use href="#bar" x="852" y="411" width="17" height="5"/>
    <use href="#cabw" x="847" y="418" width="27" height="7"/><use href="#bar" x="852" y="427" width="17" height="5"/>
    <use href="#cabw" x="847" y="435" width="27" height="7"/><use href="#bar" x="852" y="444" width="17" height="5"/>
    <use href="#cab" x="879" y="406" width="31" height="36"/><use href="#cab" x="912" y="407" width="30" height="33"/>
    <use href="#bar" x="888" y="444" width="14" height="5"/><use href="#bar" x="920" y="444" width="14" height="5"/>
    <!-- sheet 8 -->
    <use href="#frame" x="979" y="380" width="119" height="85"/>
    <rect x="982" y="388" width="21" height="3" fill="#f01010"/><rect x="1062" y="389" width="14" height="7" fill="#f01010"/>
    <use href="#cabw" x="991" y="402" width="16" height="8"/><use href="#bar" x="992" y="412" width="14" height="5"/>
    <use href="#cab" x="996" y="420" width="11" height="11"/><use href="#cab" x="996" y="433" width="11" height="9"/>
    <use href="#cab" x="1021" y="400" width="17" height="37"/><use href="#cab" x="1043" y="400" width="21" height="33"/>
    <rect x="1026" y="422" width="7" height="6" fill="#2a8d3a"/><rect x="1050" y="423" width="8" height="5" fill="#2a8d3a"/>
    <rect x="983" y="445" width="10" height="6" fill="none" stroke="#ddd"/><rect x="996" y="445" width="11" height="6" fill="none" stroke="#ddd"/><rect x="1011" y="445" width="7" height="6" fill="none" stroke="#ddd"/>
    <use href="#bar" x="1024" y="438" width="12" height="5"/><use href="#bar" x="1047" y="435" width="12" height="5"/>
    <!-- sheet 9 -->
    <use href="#frame" x="1121" y="380" width="138" height="97"/>
    <rect x="1125" y="388" width="29" height="4" fill="#f01010"/><rect x="1220" y="389" width="14" height="7" fill="#f01010"/>
    <use href="#cabw" x="1132" y="397" width="45" height="7"/><use href="#bar" x="1144" y="404" width="20" height="5"/><path d="M1178 398H1181V408H1178" stroke="#5a5f65" fill="none"/>
    <use href="#cab" x="1137" y="407" width="9" height="6"/><use href="#cabw" x="1132" y="418" width="35" height="7"/><use href="#cabw" x="1170" y="419" width="23" height="6"/><use href="#bar" x="1143" y="425" width="14" height="5"/>
    <use href="#cab" x="1130" y="432" width="49" height="33"/><use href="#cab" x="1184" y="431" width="49" height="35"/>
    <rect x="1148" y="445" width="16" height="12" fill="#3a3f45" stroke="#e01414"/><rect x="1200" y="445" width="16" height="12" fill="#3a3f45" stroke="#e01414"/>
    <use href="#bar" x="1145" y="468" width="14" height="5"/><use href="#bar" x="1200" y="468" width="14" height="5"/>
    <!-- sheet 10 -->
    <use href="#frame" x="1281" y="380" width="138" height="97"/>
    <rect x="1284" y="388" width="24" height="4" fill="#f01010"/><rect x="1380" y="389" width="14" height="7" fill="#f01010"/>
    <use href="#cabw" x="1304" y="409" width="15" height="9"/><path d="M1319 411H1325V429H1321V418" stroke="#5a5f65" fill="none"/>
    <use href="#cab" x="1338" y="415" width="15" height="15"/><use href="#cab" x="1361" y="416" width="16" height="14"/>
    <use href="#bar" x="1305" y="431" width="17" height="5"/><use href="#bar" x="1337" y="433" width="17" height="5"/><use href="#bar" x="1358" y="433" width="17" height="5"/>
    <!-- sheet 11 -->
    <use href="#frame" x="1441.500" y="380" width="199" height="142"/>
    <rect x="1448" y="394" width="21" height="4" fill="#f01010"/><rect x="1448" y="400" width="9" height="3.500" fill="#f01010"/><rect x="1476" y="396" width="14" height="2" fill="#e01414"/><rect x="1476" y="399" width="15" height="2" fill="#e01414"/><rect x="1476" y="402" width="17" height="2.500" fill="#e01414"/>
    <use href="#room" x="1475" y="417" width="36" height="33"/><use href="#room" x="1523" y="417" width="36" height="33"/>
    <circle cx="1491" cy="438" r="3" fill="#eee"/><circle cx="1540" cy="438" r="3" fill="#eee"/>
    <use href="#bar" x="1486" y="451" width="15" height="6"/><use href="#bar" x="1535" y="451" width="15" height="6"/>
    <use href="#cab" x="1473" y="467" width="31" height="31"/><rect x="1513" y="467" width="32" height="20" fill="#494d52"/><use href="#cabw" x="1513" y="485" width="33" height="13"/><use href="#cabw" x="1557" y="465" width="30" height="12"/><use href="#cabw" x="1557" y="484" width="30" height="14"/>
    <use href="#bar" x="1480" y="501" width="14" height="6"/><use href="#bar" x="1522" y="501" width="14" height="6"/><use href="#bar" x="1565" y="501" width="14" height="6"/>
    <!-- ucs -->
    <path d="M15 713V763M15 766.500H67" stroke="#c8c8c8" stroke-width="1"/>
    <rect x="11.500" y="760.500" width="9" height="9" fill="none" stroke="#c8c8c8"/>
    <text class="ucs" x="18" y="709">Y</text><text class="ucs" x="70" y="765">X</text>
  </svg>

  <div class="rightedge"></div>

  <div class="viewcube">
    <div class="ring"></div>
    <span class="dir d-n">北</span><span class="dir d-s">南</span><span class="dir d-e">东</span><span class="dir d-w">西</span>
    <div class="cube"><span>上</span></div>
  </div>
  <div class="wcs">WCS<i class="caret"></i></div>

  <div class="navbar">
    <svg viewBox="0 0 33 217" width="33" height="217">
      <g fill="none" stroke="#6a6e73">
        <circle cx="28" cy="6" r="3.500"/><circle cx="28" cy="211" r="3.500"/>
        <circle cx="17" cy="27" r="11" stroke-width="3"/><circle cx="17" cy="27" r="4"/>
        <path d="M4 27V15H27" stroke-width="1"/>
        <path d="M13 50 17 54 21 50" stroke-width="1.500"/>
        <path d="M9 84 6 72C5 69 8 68 9 71L11 75 11 65C11 62 14 62 14 65L15 72 16 63C16 60 19 60 19 63L19 72 21 64C22 61 25 62 24 65L23 74 26 69C28 67 30 69 29 71L24 84C22 88 12 88 9 84Z" stroke-width="1.500"/>
        <path d="M6 94 26 116M26 94 6 116M6 94H10M6 94V98M26 94H22M26 94V98" stroke-width="1.500"/>
        <circle cx="22" cy="114" r="6" stroke-width="1.500"/><path d="M26 118 30 122" stroke-width="2"/>
        <rect x="4" y="182" width="6" height="7"/><rect x="13" y="182" width="6" height="7"/><rect x="22" y="182" width="6" height="7"/>
        <rect x="4" y="191" width="22" height="15" stroke-width="1.500"/>
      </g>
      <path d="M12 194V203L20 198.500Z" fill="#6a6e73"/>
    </svg>
  </div>

  <div class="history">
    <div class="hline">命令: 指定对角点或 [栏选(F)/圈围(WP)/圈交(CP)]:</div>
    <div class="hline">命令: _.erase 找到 3 个</div>
  </div>

  <div class="cmdbar">
    <div class="cmdtools">
      <span class="grip"></span><span class="cmdx">✕</span>
      <svg viewBox="0 0 16 20" width="18" height="20"><path d="M2 19 9 8C8 4 10 1 14 1L11.500 4 13 6.500 16 4C16 8 13 10 10.500 9.500L4 19.500Z" fill="#c8cbce"/></svg>
    </div>
    <div class="cmdinput">
      <svg viewBox="0 0 18 14" width="18" height="14"><rect x=".5" y=".5" width="17" height="13" fill="#8e9093" stroke="#555"/><rect x="1" y="1" width="16" height="3" fill="#555"/><path d="M3 6 6 8 3 10M7 11H11" stroke="#222" fill="none"/></svg>
      <i class="caret dark"></i>
      <span class="placeholder">键入命令</span>
      <i class="up dark push"></i>
    </div>
  </div>

  <div class="brand">知末</div>
  <div class="brandid">ID: 1156983158</div>
</main>

<footer class="status">
  <div class="status-tabs"><span class="stab on">模型</span><span class="stab">布局1</span><span class="stab">+</span></div>
  <div class="status-items">
    <span class="seg s27"></span><span class="seg s67 apart"></span><span class="seg s24 on"></span><span class="seg s82"></span><span class="seg s24 on"></span><span class="seg s25 on"></span><span class="seg s17"></span><span class="seg s24 on"></span><span class="seg s85"></span><span class="seg s41 apart"></span><span class="seg s26"></span><span class="seg s25"></span><span class="seg s17 on apart"></span><span class="seg s38"></span><span class="seg s47 apart"></span>
  </div>
</footer>

<div class="watermarks" aria-hidden="true">
  <span class="wm w-a">知末网 www.znzmo.com</span>
  <span class="wm w-b">知末网 www.znzmo.com</span>
  <span class="wm w-c">知末网 www.znzmo.com</span>
  <span class="wm w-d">知末网 www.znzmo.com</span>
  <span class="wm w-e">知末网 www.znzmo.com</span>
  <span class="wm w-f">知末网 www.znzmo.com</span>
  <span class="wm w-g">知末网 www.znzmo.com</span>
</div>
</body>
</html>
```

FILE: styles.css
```css
* { box-sizing: border-box; }
html, body { margin: 0; height: 789px; overflow: hidden; }
body {
  position: relative;
  display: flex;
  flex-direction: column;
  width: 1600px;
  background: #222933;
  color: #d3d6d9;
  font: 12px/16px "Noto Sans CJK SC", "Noto Sans", sans-serif;
}
i { font-style: normal; display: block; }
.sprite { position: absolute; width: 0; height: 0; }

.topbar {
  height: 5px;
  flex: none;
  display: flex;
  gap: 57px;
  padding-left: 83px;
  background: #20262f;
  border-bottom: 1px solid #3a4452;
}
.mark { width: 9px; height: 2px; border: 1px solid #6a7078; border-top: 0; }
.imebar { position: absolute; left: 1384px; top: 0; height: 12px; line-height: 0; }

.tabs { height: 21px; flex: none; display: flex; align-items: flex-end; padding-left: 1px; background: #20262f; }
.tab { height: 19px; padding: 0 10.67px; line-height: 18px; color: #c2c6ca; border-radius: 3px 3px 0 0; }
.tab.active { background: #3b4453; color: #e3e5e7; }
.tab:last-of-type { padding-left: 12px; }
.toggle { display: flex; align-items: center; gap: 6px; margin-left: 24px; height: 19px; }
.toggle-pill { width: 14px; height: 8px; background: #e0e0e0; border-radius: 2px; display: flex; align-items: center; justify-content: center; }
.up { width: 0; height: 0; border: 3px solid transparent; border-top: 0; border-bottom: 4px solid #333; }
.up.dark { border-bottom-color: #666; border-left-width: 4px; border-right-width: 4px; border-bottom-width: 6px; }
.caret { width: 0; height: 0; border: 3px solid transparent; border-bottom: 0; border-top: 4px solid #d3d6d9; }
.caret.dark { border-top-color: #444; border-width: 5px 4px 0; }
.push { margin-left: auto; }
.big-caret { border-width: 5px 5px 0; }

.ribbon { height: 101px; flex: none; display: flex; gap: 1px; padding-left: 2px; }
.panel { flex: none; display: flex; flex-direction: column; background: #3b4453; height: 101px; }
.p-draw { width: 218px; }
.p-modify { width: 235px; }
.p-note { width: 164px; }
.p-layer { width: 262px; }
.p-block { width: 140px; }
.p-prop { width: 255px; }
.p-group { width: 69px; }
.p-util { width: 78px; }
.p-clip { width: 79px; }
.p-view { width: 63px; }

.body { height: 80px; padding-top: 2px; display: flex; }
.title {
  position: relative;
  height: 21px;
  padding-top: 2px;
  display: flex;
  justify-content: center;
  align-items: center;
  gap: 7px;
  font-size: 12px;
  color: #d3d6d9;
}
.launch { position: absolute; right: 5px; top: 9px; width: 6px; height: 6px; border-right: 2px solid #aeb3b8; border-bottom: 2px solid #aeb3b8; }

.big { flex: none; display: flex; flex-direction: column; align-items: center; }
.bigic { width: 36px; height: 34px; margin: 4px 0; flex: none; }
.big .caret { margin-top: 2px; }
.biga { font: 400 40px/42px "Liberation Sans", sans-serif; height: 42px; color: #dcdcdc; -webkit-text-stroke: .4px #dcdcdc; }
.w38 { width: 38px; }
.w42 { width: 42px; }
.w46 { width: 46px; }
.w50 { width: 50px; }
.w52 { width: 52px; }
.w62 { width: 63px; }

.rows { display: grid; grid-auto-rows: 26px; margin-top: 1px; }
.row { display: flex; align-items: center; gap: 3px; }
.ic { width: 22px; height: 22px; flex: none; }
.w-draw { width: 43px; padding-right: 10px; }
.w-note { width: 64px; margin-left: 3px; }
.w-block { width: 91px; margin-left: 1px; }
.w-block .row { gap: 5px; }
.w-narrow { width: 26px; }
.w-narrow .row { justify-content: center; }
.p-clip .big { margin-left: 1px; }

.modify-grid {
  display: grid;
  grid-template-columns: 62px 62px 78px 22px;
  grid-auto-rows: 26px;
  padding: 3px 0 0 3px;
}
.modify-grid .caret { margin-right: 7px; }

.combo { display: flex; align-items: center; background: #4a5568; box-shadow: 0 0 0 1px #333b49 inset; }
.combo-text { font-family: "Noto Sans", sans-serif; font-size: 12px; color: #d8dbde; letter-spacing: .2px; }
.swatch { width: 15px; height: 15px; background: #fff; border: 1px solid #11151a; }

.layer-col { margin-left: 1px; display: flex; flex-direction: column; width: 217px; }
.layer-combo { height: 23px; margin: 2px 0; padding: 0 5px; width: 217px; flex: none; }
.lc1 { width: 13px; height: 18px; margin-left: 1px; }
.lc2 { width: 16px; height: 16px; margin-left: 7px; }
.lc3 { width: 16px; height: 18px; margin-left: 5px; }
.layer-combo .swatch { margin-left: 5px; }
.layer-combo .combo-text { margin-left: 5px; font-size: 13px; }
.layer-row { height: 26px; flex: none; display: flex; align-items: center; gap: 3.500px; }
.layer-row span { margin-left: 1px; }

.prop-col { display: flex; flex-direction: column; gap: 3px; padding-top: 4px; }
.prop-row { height: 22px; display: flex; align-items: center; gap: 1px; }
.prop-combo { width: 187px; height: 22px; padding: 0 3px; }
.prop-swatch { width: 17px; height: 17px; margin-left: 9px; margin-right: 9px; border: 1px solid #333; }
.combo-line { width: 67px; height: 1px; background: #d0d3d6; margin-right: 2px; }
.hot { display: flex; width: 26px; height: 24px; align-items: center; justify-content: center; background: #33506f; border: 1px solid #5fa0d8; }

.doctabs { height: 28px; flex: none; display: flex; align-items: flex-end; padding-left: 20px; background: #222933; }
.doctab {
  height: 23px;
  line-height: 22px;
  font-size: 12.500px;
  display: flex;
  align-items: center;
  background: #2b333e;
  color: #a9aeb3;
  width: 130px;
  padding-left: 12px;
  clip-path: polygon(0 100%, 4px 45%, 8px 10%, 14px 0, calc(100% - 14px) 0, calc(100% - 8px) 10%, calc(100% - 4px) 45%, 100% 100%);
}
.doctab.current { width: 150px; background: #3b4453; color: #d3d6d9; padding-left: 11px; }
.close { font-weight: 400; margin-left: 6px; font-size: 15px; color: #cfd2d5; }
.doctab.plus { width: 22px; height: 20px; padding: 0; margin-left: 6px; justify-content: center; background: #2f3743; font-size: 14px; color: #c8cbce; }
.band { height: 5px; flex: none; background: #3a4452; }

.viewport { position: relative; flex: 1; background: #212830; overflow: hidden; }
.drawing { position: absolute; left: 0; top: 0; }
.ucs { font: 300 20px "Lato", "Liberation Sans", sans-serif; fill: #d0d0d0; }
.viewlabel { position: absolute; left: 2px; top: 5px; font-size: 13px; color: #c8cbce; }
.rightedge { position: absolute; right: 0; top: 0; bottom: 0; width: 4px; background: #b9cfe8; }

.viewcube { position: absolute; left: 1463px; top: 12px; width: 120px; height: 120px; }
.ring { position: absolute; left: 8px; top: 8px; width: 104px; height: 104px; border-radius: 50%; border: 11px solid #3d4650; }
.cube { position: absolute; left: 38px; top: 37px; width: 45px; height: 45px; padding: 8px; background: #b5b7b9; border: 1px solid #8c9196; }
.cube span { display: block; width: 28px; height: 28px; background: #a6adb4; font-size: 26px; line-height: 27px; text-align: center; color: #4a545f; }
.dir { position: absolute; font-size: 16px; line-height: 18px; color: #b9bbbd; }
.d-n { left: 52px; top: 2px; }
.d-s { left: 52px; top: 100px; }
.d-e { left: 101px; top: 51px; }
.d-w { left: 3px; top: 51px; }
.wcs {
  position: absolute; left: 1498px; top: 148px; width: 47px; height: 18px;
  display: flex; align-items: center; justify-content: center; gap: 5px;
  background: #6c7282; border: 1px solid #7c8292; border-radius: 6px;
  font: 11px/16px "Liberation Sans", sans-serif; letter-spacing: .4px; color: #b7bbc3;
}
.wcs .caret { border-top-color: #a5aab4; border-width: 5px 5px 0; }

.navbar { position: absolute; left: 1560px; top: 190px; width: 33px; height: 217px; border-radius: 6px; background: rgba(170, 172, 176, .32); line-height: 0; }

.history { position: absolute; left: 395px; top: 554px; display: flex; flex-direction: column; align-items: flex-start; gap: 5px; }
.hline {
  height: 16px; padding: 0 2px;
  font: 13px/16px "Liberation Mono", "Noto Sans CJK SC", monospace;
  color: #6e7479; background: #383e45; border-radius: 2px; white-space: pre;
}

.cmdbar { position: absolute; left: 331px; top: 593px; width: 942px; height: 27px; display: flex; }
.cmdtools { width: 59px; display: flex; align-items: center; background: #2c3440; padding-left: 4px; border-radius: 3px 0 0 0; }
.grip { width: 5px; height: 18px; border-left: 2px dotted #c0c3c6; border-right: 2px dotted #c0c3c6; }
.cmdx { margin-left: 5px; font-size: 15px; color: #d0d3d6; }
.cmdtools svg { margin-left: 6px; }
.cmdinput { flex: 1; display: flex; align-items: center; background: #bebebe; border-bottom: 1px solid #d4d4d4; padding: 0 6px 0 4px; border-radius: 3px 3px 0 0; }
.cmdinput .caret { margin-left: 1px; }
.placeholder { margin-left: 8px; font-style: italic; font-size: 13.500px; color: #6a6a6a; }

.brand { position: absolute; left: 1406px; top: 497px; font: 62px/80px "Liberation Sans", "Noto Sans CJK SC", sans-serif; letter-spacing: -1px; color: #c9c9c9; }
.brandid { position: absolute; left: 1361px; top: 569px; font: 700 34px/42px "Lato", "Noto Sans", sans-serif; color: #fff; white-space: nowrap; transform: scaleX(.9); transform-origin: 0 50%; }

.status { height: 8px; flex: none; display: flex; justify-content: space-between; background: #222933; border-top: 2px solid #2f3743; overflow: hidden; }
.status-tabs { display: flex; padding-left: 5px; gap: 3px; }
.stab { width: 58px; height: 18px; text-align: center; font-size: 12px; line-height: 14px; padding-top: 1px; background: #2b333e; color: #c8cbce; border-radius: 5px 5px 0 0; }
.stab.on { background: #3b4453; color: #fff; }
.stab:last-child { width: 22px; }
.status-items { display: flex; gap: 1px; }
.seg { display: block; height: 6px; background: #3b4453; }
.seg.on { background: #5f8fc0; }
.seg.apart { margin-left: 2px; }
.s17 { width: 17px; } .s24 { width: 24px; } .s25 { width: 25px; } .s26 { width: 26px; } .s27 { width: 27px; }
.s38 { width: 38px; } .s41 { width: 41px; } .s47 { width: 47px; } .s67 { width: 67px; } .s82 { width: 82px; } .s85 { width: 85px; }

.watermarks { position: absolute; inset: 0; overflow: hidden; pointer-events: none; }
.wm { position: absolute; font-size: 32px; line-height: 40px; white-space: nowrap; color: rgba(255, 255, 255, .07); transform: rotate(-45deg); transform-origin: 0 50%; }
.w-a { left: 2px; top: 362px; }
.w-b { left: 555px; top: 362px; }
.w-c { left: 1108px; top: 362px; }
.w-d { left: -140px; top: 715px; }
.w-e { left: 395px; top: 750px; }
.w-f { left: 955px; top: 725px; }
.w-g { left: 1505px; top: 725px; }
```
